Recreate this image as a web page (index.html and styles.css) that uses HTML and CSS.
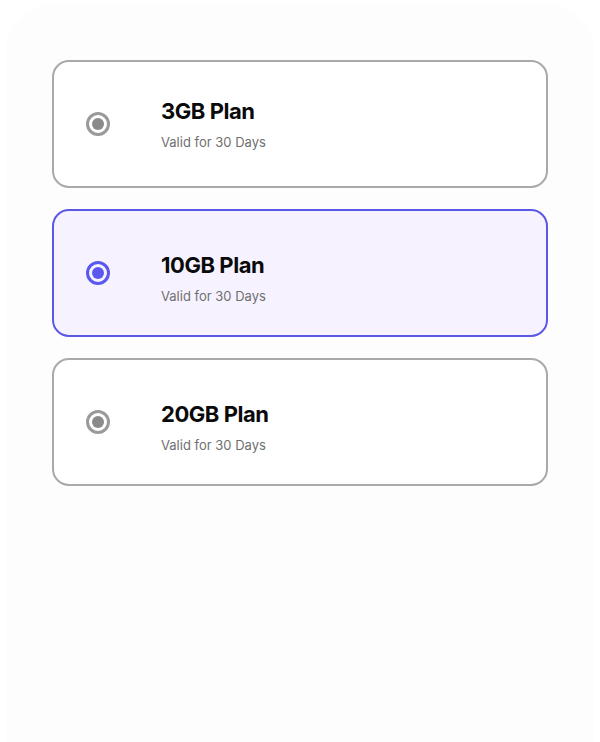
FILE: index.html
```html
<!DOCTYPE html>
<html lang="en">
<head>
    <meta charset="UTF-8">
    <meta name="viewport" content="width=device-width, initial-scale=1.0">
    <title>Choose Plan</title>
    <link rel="stylesheet" href="styles.css">
</head>
<body>
    <div class="sheet">
        <div class="plan-list">
            <label class="plan">
                <span class="radio"></span>
                <span class="plan-text">
                    <span class="plan-name">3GB Plan</span>
                    <span class="plan-valid">Valid for 30 Days</span>
                </span>
            </label>
            <label class="plan selected">
                <span class="radio"></span>
                <span class="plan-text">
                    <span class="plan-name">10GB Plan</span>
                    <span class="plan-valid">Valid for 30 Days</span>
                </span>
            </label>
            <label class="plan">
                <span class="radio"></span>
                <span class="plan-text">
                    <span class="plan-name">20GB Plan</span>
                    <span class="plan-valid">Valid for 30 Days</span>
                </span>
            </label>
        </div>
    </div>
</body>
</html>
```

FILE: styles.css
```css
body {
    margin: 0;
    background: #ffffff;
    font-family: Inter, "Noto Sans", sans-serif;
}

.sheet {
    margin: 4px 6px 0;
    min-height: 738px;
    background: #fdfdfd;
    border-radius: 48px 48px 0 0;
    padding: 56px 46px 0;
    box-sizing: border-box;
}

.plan-list {
    display: flex;
    flex-direction: column;
    gap: 21px;
}

.plan {
    display: flex;
    align-items: center;
    gap: 51px;
    height: 128px;
    box-sizing: border-box;
    padding: 0 32px;
    border: 2px solid #a9a9a9;
    border-radius: 17px;
    background: #ffffff;
    cursor: pointer;
}

.radio {
    width: 24px;
    height: 24px;
    box-sizing: border-box;
    border: 3px solid #9a9a9a;
    border-radius: 50%;
    display: flex;
    align-items: center;
    justify-content: center;
    flex-shrink: 0;
}

.radio::after {
    content: "";
    width: 12px;
    height: 12px;
    border-radius: 50%;
    background: #8a8a8a;
}

.plan-text {
    display: flex;
    flex-direction: column;
    gap: 10px;
}

/* lower rows sit a little lower than the first */
.plan + .plan .plan-text {
    margin-top: 9px;
}

.plan-name {
    font-size: 22px;
    font-weight: 700;
    letter-spacing: -0.45px;
    color: #0a0a0a;
}

.plan-valid {
    font-size: 13px;
    color: #6f6f6f;
}

.plan.selected {
    border-color: #5b58e6;
    background: #f6f2ff;
}

.plan.selected .radio {
    border-color: #5b58ef;
}

.plan.selected .radio::after {
    background: #5b58ef;
}
```
